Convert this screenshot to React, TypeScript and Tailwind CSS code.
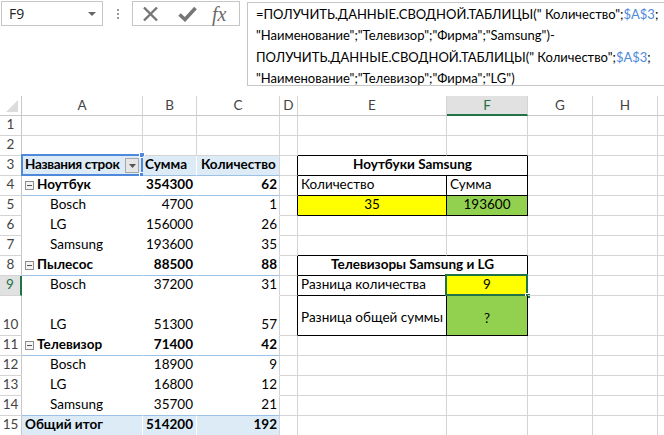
import React from 'react';

type Col = 'A' | 'B' | 'C' | 'D' | 'E' | 'F' | 'G' | 'H' | 'I';

const widths: Record<Col, string> = {
  A: 'w-[121px]',
  B: 'w-[54px]',
  C: 'w-[83px]',
  D: 'w-[18px]',
  E: 'w-[149px]',
  F: 'w-[81px]',
  G: 'w-[65px]',
  H: 'w-[65px]',
  I: 'w-[40px]',
};

const cols: Col[] = ['A', 'B', 'C', 'D', 'E', 'F', 'G', 'H', 'I'];

type PivotRow = { a: string; b: string; c: string; kind: 'head' | 'group' | 'item' | 'total' };

const pivot: Record<number, PivotRow> = {
  3: { a: 'Названия строк', b: 'Сумма', c: 'Количество', kind: 'head' },
  4: { a: 'Ноутбук', b: '354300', c: '62', kind: 'group' },
  5: { a: 'Bosch', b: '4700', c: '1', kind: 'item' },
  6: { a: 'LG', b: '156000', c: '26', kind: 'item' },
  7: { a: 'Samsung', b: '193600', c: '35', kind: 'item' },
  8: { a: 'Пылесос', b: '88500', c: '88', kind: 'group' },
  9: { a: 'Bosch', b: '37200', c: '31', kind: 'item' },
  10: { a: 'LG', b: '51300', c: '57', kind: 'item' },
  11: { a: 'Телевизор', b: '71400', c: '42', kind: 'group' },
  12: { a: 'Bosch', b: '18900', c: '9', kind: 'item' },
  13: { a: 'LG', b: '16800', c: '12', kind: 'item' },
  14: { a: 'Samsung', b: '35700', c: '21', kind: 'item' },
  15: { a: 'Общий итог', b: '514200', c: '192', kind: 'total' },
};

const blueLineRows = [3, 4, 8, 11, 14];
const boxedRows = [3, 4, 5, 8, 9, 10];

function Cell({ w, className = '', children }: { w: string; className?: string; children?: React.ReactNode }) {
  return (
    <div className={`relative shrink-0 h-full box-border flex whitespace-nowrap border-r border-b px-[3px] ${w} ${className}`}>
      {children}
    </div>
  );
}

function MinusBox() {
  return (
    <span className="mr-[3px] mb-[5px] inline-flex h-[9px] w-[9px] shrink-0 items-center justify-center border border-[#8e8e8e] bg-[#f4f4f4]">
      <span className="h-[1px] w-[5px] bg-[#555]" />
    </span>
  );
}

function PivotCells({ n }: { n: number }) {
  const p = pivot[n];
  const bg = p.kind === 'head' || p.kind === 'total' ? 'bg-[#ddebf7]' : 'bg-white';
  const bottom = blueLineRows.includes(n) ? 'border-b-[#9bc2e6]' : 'border-b-white';
  const bold = p.kind !== 'item' ? 'font-bold' : '';
  return (
    <>
      <Cell w={widths.A} className={`${bg} ${bottom} border-r-white items-end ${bold}`}>
        {p.kind === 'head' && (
          <>
            <span className="pb-[1px] tracking-[-0.3px]">{p.a}</span>
            <span className="absolute right-[3px] top-[2px] flex h-[15px] w-[14px] items-center justify-center border border-[#a8a8a8] bg-[#e6e6e6]">
              <svg width="7" height="4" viewBox="0 0 7 4">
                <polygon points="0,0 7,0 3.5,4" fill="#555" />
              </svg>
            </span>
            <div className="pointer-events-none absolute -left-[1px] -top-[2px] h-[22px] w-[122px] border-2 border-[#4f89dc]" />
            <div className="absolute -right-[3px] -top-[4px] h-[6px] w-[6px] border border-white bg-[#4f89dc]" />
            <div className="absolute -right-[3px] -bottom-[3px] h-[6px] w-[6px] border border-white bg-[#4f89dc]" />
          </>
        )}
        {p.kind === 'group' && (
          <>
            <MinusBox />
            <span className="pb-[1px]">{p.a}</span>
          </>
        )}
        {p.kind === 'item' && <span className="pb-[1px] pl-[25px]">{p.a}</span>}
        {p.kind === 'total' && <span className="pb-[1px]">{p.a}</span>}
      </Cell>
      <Cell w={widths.B} className={`${bg} ${bottom} border-r-white items-end ${p.kind === 'head' ? 'pl-[2px]' : 'justify-end'} ${bold}`}>
        <span className="pb-[1px]">{p.b}</span>
      </Cell>
      <Cell w={widths.C} className={`${bg} ${bottom} border-r-[#d4d4d4] items-end ${p.kind === 'head' ? 'pl-[4px]' : 'justify-end pr-[2px]'} ${bold}`}>
        <span className="pb-[1px]">{p.c}</span>
      </Cell>
    </>
  );
}

function RightCells({ n }: { n: number }) {
  const grid = 'border-r-[#d4d4d4] border-b-[#d4d4d4]';
  const black = 'border-r-black border-b-black';
  if (n === 3 || n === 8) {
    return (
      <Cell w="w-[230px]" className={`${black} items-end justify-center font-bold`}>
        <span className="pb-[1px]">{n === 3 ? 'Ноутбуки Samsung' : 'Телевизоры Samsung и LG'}</span>
      </Cell>
    );
  }
  if (n === 4) {
    return (
      <>
        <Cell w={widths.E} className={`${black} items-end`}><span className="pb-[1px]">Количество</span></Cell>
        <Cell w={widths.F} className={`${black} items-end`}><span className="pb-[1px]">Сумма</span></Cell>
      </>
    );
  }
  if (n === 5) {
    return (
      <>
        <Cell w={widths.E} className={`${black} bg-[#ffff00] items-end justify-center`}><span className="pb-[1px]">35</span></Cell>
        <Cell w={widths.F} className={`${black} bg-[#92d050] items-end justify-center`}><span className="pb-[1px]">193600</span></Cell>
      </>
    );
  }
  if (n === 9) {
    return (
      <>
        <Cell w={widths.E} className={`${black} items-end`}><span className="pb-[1px]">Разница количества</span></Cell>
        <Cell w={widths.F} className={`${black} bg-[#ffff00] items-end justify-center`}>
          <span className="pb-[1px]">9</span>
          <div className="pointer-events-none absolute -left-[2px] -top-[2px] h-[22px] w-[83px] border-2 border-[#217346]" />
          <div className="absolute -right-[4px] -bottom-[4px] h-[6px] w-[6px] border border-white bg-[#217346]" />
        </Cell>
      </>
    );
  }
  if (n === 10) {
    return (
      <>
        <Cell w={widths.E} className={`${black} items-center`}><span className="pt-[3px]">Разница общей суммы</span></Cell>
        <Cell w={widths.F} className={`${black} bg-[#92d050] items-center justify-center`}><span className="pt-[5px]">?</span></Cell>
      </>
    );
  }
  const b = n === 2 || n === 7 ? 'border-r-[#d4d4d4] border-b-black' : grid;
  return (
    <>
      <Cell w={widths.E} className={b} />
      <Cell w={widths.F} className={b} />
    </>
  );
}

function Row({ n }: { n: number }) {
  const selected = n === 9;
  const tall = n === 10;
  const grid = 'border-r-[#d4d4d4] border-b-[#d4d4d4]';
  return (
    <div className={`flex ${tall ? 'h-[40px]' : 'h-[20px]'}`}>
      <div
        className={`shrink-0 w-[22px] h-full box-border flex items-end justify-center border-b border-b-[#d4d4d4] ${
          selected ? 'bg-[#e1e1e1] text-[#217346] border-r-2 border-r-[#217346]' : 'bg-white text-[#444] border-r border-r-[#c8c8c8]'
        }`}
      >
        <span className="pb-[1px]">{n}</span>
      </div>
      {pivot[n] ? (
        <PivotCells n={n} />
      ) : (
        <>
          <Cell w={widths.A} className={grid} />
          <Cell w={widths.B} className={grid} />
          <Cell w={widths.C} className={grid} />
        </>
      )}
      <Cell w={widths.D} className={boxedRows.includes(n) ? 'border-r-black border-b-[#d4d4d4]' : grid} />
      <RightCells n={n} />
      <Cell w={widths.G} className={grid} />
      <Cell w={widths.H} className={grid} />
      <Cell w={widths.I} className={grid} />
    </div>
  );
}

function HeaderRow() {
  return (
    <div className="flex h-[20px]">
      <div className="relative shrink-0 w-[22px] h-full box-border border-r border-b border-[#c8c8c8] bg-white">
        <svg className="absolute left-[6px] top-[4px]" width="12" height="12" viewBox="0 0 12 12">
          <polygon points="12,0 12,12 0,12" fill="#dcdcdc" />
        </svg>
      </div>
      {cols.map((c) => (
        <div
          key={c}
          className={`shrink-0 h-full box-border flex items-center justify-center border-r border-r-[#d4d4d4] ${widths[c]} ${
            c === 'F' ? 'bg-[#e1e1e1] text-[#217346] border-b-2 border-b-[#217346]' : 'bg-white text-[#444] border-b border-b-[#c8c8c8]'
          }`}
        >
          {c === 'I' ? '' : c}
        </div>
      ))}
    </div>
  );
}

function FormulaBar() {
  const ref = 'text-[#4f89dc]';
  return (
    <div className="flex h-[96px] items-start bg-white">
      <div className="ml-[1px] mt-[1px] flex h-[25px] w-[102px] shrink-0 items-center border border-[#c6c6c6] pl-[7px] text-[14px] text-[#222] [font-family:'Open_Sans',sans-serif]">
        <span>F9</span>
        <svg className="ml-auto mr-[6px]" width="8" height="4" viewBox="0 0 8 4">
          <polygon points="0,0 8,0 4,4" fill="#666" />
        </svg>
      </div>
      <div className="ml-[14px] mt-[9px] flex shrink-0 flex-col gap-[2px]">
        <span className="h-[2px] w-[2px] bg-[#9a9a9a]" />
        <span className="h-[2px] w-[2px] bg-[#9a9a9a]" />
        <span className="h-[2px] w-[2px] bg-[#9a9a9a]" />
      </div>
      <div className="ml-[13px] mt-[1px] flex h-[25px] w-[108px] shrink-0 items-center border border-[#c6c6c6] text-[#777]">
        <svg className="ml-[9px]" width="17" height="16" viewBox="0 0 17 16">
          <path d="M2 1.5 L15 14.5 M15 1.5 L2 14.5" stroke="#767676" strokeWidth="2.4" fill="none" />
        </svg>
        <svg className="ml-[19px]" width="19" height="16" viewBox="0 0 19 16">
          <path d="M1.5 8.5 L7 13.5 L17.5 2" stroke="#767676" strokeWidth="3.6" fill="none" />
        </svg>
        <span className="ml-[15px] text-[20px] italic leading-none text-[#6a6a6a] [font-family:'Liberation_Serif',serif]">fx</span>
      </div>
      <div className="ml-[7px] mt-[2px] h-[84px] w-[440px] shrink-0 border border-[#c6c6c6] pl-[8px] pt-[1px] text-[13px] leading-[21.3px] text-black whitespace-nowrap">
        <div>
          =ПОЛУЧИТЬ.ДАННЫЕ.СВОДНОЙ.ТАБЛИЦЫ(" Количество";<span className={ref}>$A$3</span>;
        </div>
        <div>"Наименование";"Телевизор";"Фирма";"Samsung")-</div>
        <div>
          ПОЛУЧИТЬ.ДАННЫЕ.СВОДНОЙ.ТАБЛИЦЫ(" Количество";<span className={ref}>$A$3</span>;
        </div>
        <div>"Наименование";"Телевизор";"Фирма";"LG")</div>
      </div>
    </div>
  );
}

export default function App() {
  const rows = Array.from({ length: 15 }, (_, i) => i + 1);
  return (
    <div className="h-[435px] w-[664px] overflow-hidden bg-white text-[13.5px] leading-[19px] text-black [font-family:Lato,sans-serif]">
      <FormulaBar />
      <HeaderRow />
      {rows.map((n) => (
        <Row key={n} n={n} />
      ))}
    </div>
  );
}
